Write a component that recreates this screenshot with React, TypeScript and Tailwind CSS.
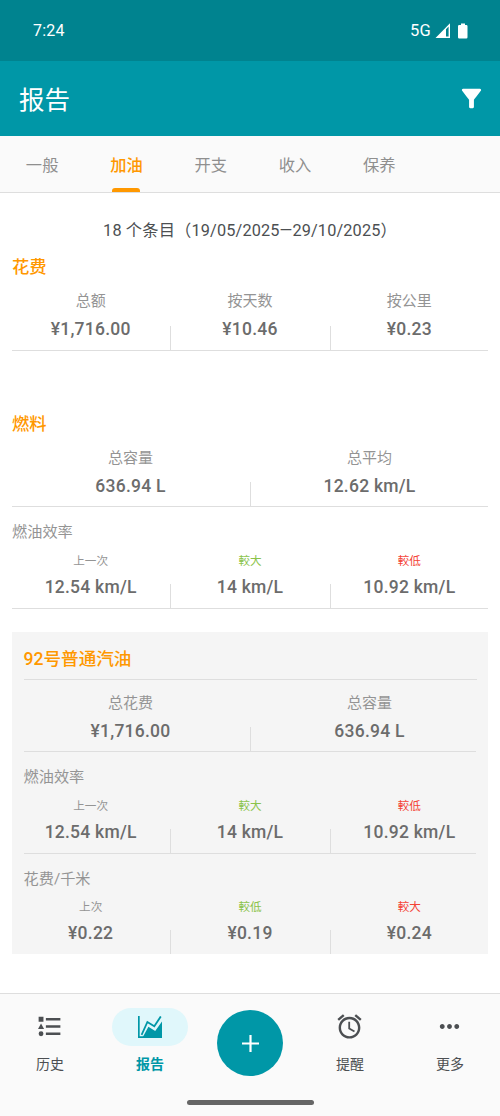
import React from "react";

const listIcon =
  "M5,9.5L7.5,14H2.5L5,9.5M3,4H7V8H3V4M5,20A2,2 0 0,0 7,18A2,2 0 0,0 5,16A2,2 0 0,0 3,18A2,2 0 0,0 5,20M9,5V7H21V5H9M9,19H21V17H9V19M9,13H21V11H9V13Z";
const alarmIcon =
  "M22 5.72l-4.6-3.86-1.29 1.53 4.6 3.86L22 5.72zM7.88 3.39L6.6 1.86 2 5.71l1.29 1.53 4.59-3.85zM12.5 8H11v6l4.75 2.85.75-1.23-4-2.37V8zM12 4c-4.97 0-9 4.03-9 9s4.02 9 9 9c4.97 0 9-4.03 9-9s-4.03-9-9-9zm0 16c-3.87 0-7-3.13-7-7s3.13-7 7-7 7 3.13 7 7-3.13 7-7 7z";
const moreIcon =
  "M6 10c-1.1 0-2 .9-2 2s.9 2 2 2 2-.9 2-2-.9-2-2-2zm12 0c-1.1 0-2 .9-2 2s.9 2 2 2 2-.9 2-2-.9-2-2-2zm-6 0c-1.1 0-2 .9-2 2s.9 2 2 2 2-.9 2-2-.9-2-2-2z";
const filterIcon =
  "M4.25 5.61C6.27 8.2 10 13 10 13v6c0 .55.45 1 1 1h2c.55 0 1-.45 1-1v-6s3.72-4.8 5.74-7.39A.998.998 0 0 0 18.95 4H5.04c-.83 0-1.3.95-.79 1.61z";

function Icon({ d }: { d: string }) {
  return (
    <svg className="size-[29px]" viewBox="0 0 24 24" fill="currentColor">
      <path d={d} />
    </svg>
  );
}

type Tone = "muted" | "good" | "bad";
type Item = { label: string; value: string; tone?: Tone };

const toneClass: Record<Tone, string> = {
  muted: "text-[#949494]",
  good: "text-[#8bc34a]",
  bad: "text-[#f44336]",
};

function Stats({ items, small }: { items: Item[]; small?: boolean }) {
  const height = small ? "h-[57px]" : items.length === 2 ? "h-[61px]" : "h-[62px]";
  return (
    <div className={`-mx-px flex ${height}`}>
      {items.map((item, i) => (
        <div key={i} className="relative flex flex-1 flex-col items-center">
          <div
            className={`${small ? "h-5 text-[11.6px] leading-5" : "mt-px h-6 text-[15px] leading-6"} ${toneClass[item.tone ?? "muted"]}`}
          >
            {item.label}
          </div>
          <div
            className="mt-[4px] text-[17.5px] leading-6 font-medium tracking-[0.24px] whitespace-nowrap text-[#6c6c6c]"
          >
            {item.value}
          </div>
          {i > 0 && <div className="absolute bottom-0 left-0 h-6 w-px bg-[#dedede]" />}
        </div>
      ))}
    </div>
  );
}

const tabs = ["一般", "加油", "开支", "收入", "保养"];

const efficiency: Item[] = [
  { label: "上一次", value: "12.54 km/L" },
  { label: "較大", value: "14 km/L", tone: "good" },
  { label: "較低", value: "10.92 km/L", tone: "bad" },
];

function NavItem({ label, active, children }: { label: string; active?: boolean; children: React.ReactNode }) {
  return (
    <div className={`flex w-[100px] flex-col items-center pt-[14px] ${active ? "text-[#0097a7]" : "text-[#4c4f52]"}`}>
      <div className={`flex h-[38px] w-[76px] items-center justify-center rounded-full ${active ? "bg-[#e0f7fb]" : "pr-px pb-px"}`}>
        {children}
      </div>
      <div className={`mt-[6px] text-[14px] leading-6 ${active ? "font-bold" : ""}`}>{label}</div>
    </div>
  );
}

export default function App() {
  return (
    <div
      lang="zh-CN"
      className="flex h-[1116px] w-[500px] flex-col overflow-hidden bg-white font-['Roboto','Noto_Sans_CJK_SC',sans-serif]"
    >
      <div className="flex h-[61px] shrink-0 items-center justify-between bg-[#00838f] pr-[32px] pl-[33px] text-white">
        <span className="text-[16px] tracking-[0.2px]">7:24</span>
        <div className="flex items-center">
          <span className="pt-px text-[16.5px] tracking-[0.3px]">5G</span>
          <svg className="ml-[4px] h-[15px] w-[16px]" viewBox="0 0 16 15" fill="currentColor">
            <path fillRule="evenodd" d="M0.5 15L15 0.3V15ZM11 6.2V13.5H13.6V3.6Z" />
          </svg>
          <svg className="ml-[7px] h-[16px] w-[10px]" viewBox="0 0 10 16" fill="currentColor">
            <path d="M3 0.5H7V2H8.3Q9.5 2 9.5 3.2V14.2Q9.5 15.4 8.3 15.4H1.2Q0 15.4 0 14.2V3.2Q0 2 1.2 2H3Z" />
          </svg>
        </div>
      </div>

      <header className="flex h-[75px] shrink-0 items-center justify-between bg-[#0097a7] pr-[14px] pl-[19px] text-white">
        <h1 className="pt-[2px] text-[25.5px] leading-8">报告</h1>
        <Icon d={filterIcon} />
      </header>

      <nav className="flex h-[57px] shrink-0 border-b border-[#dedede] bg-[#fafafa]">
        {tabs.map((t, i) => (
          <div
            key={t}
            className={`flex w-[84.3px] flex-col items-center pt-[18px] text-[16.3px] leading-6 ${i === 1 ? "font-medium text-[#ff9800]" : "text-[#8f8f8f]"}`}
          >
            {t}
            {i === 1 && <div className="mt-auto h-1 w-7 rounded-t-[3px] bg-[#ff9800]" />}
          </div>
        ))}
      </nav>

      <main className="flex h-[800px] shrink-0 flex-col px-3">
        <p className="mt-[26px] h-6 text-center text-[16.3px] leading-6 tracking-[0.14px] text-[#4c4f52]">
          18 个条目（19/05/2025—29/10/2025）
        </p>
        <h2 className="mt-[12px] h-6 text-[17.3px] leading-6 font-medium text-[#ff9800]">花费</h2>
        <div className="mt-[9px] border-b border-[#dedede]">
          <Stats
            items={[
              { label: "总额", value: "¥1,716.00" },
              { label: "按天数", value: "¥10.46" },
              { label: "按公里", value: "¥0.23" },
            ]}
          />
        </div>

        <h2 className="mt-[61px] h-6 text-[17.3px] leading-6 font-medium text-[#ff9800]">燃料</h2>
        <div className="mt-[9px] border-b border-[#dedede]">
          <Stats
            items={[
              { label: "总容量", value: "636.94 L" },
              { label: "总平均", value: "12.62 km/L" },
            ]}
          />
        </div>
        <h3 className="mt-[13px] h-6 text-[15.2px] leading-6 text-[#949494]">燃油效率</h3>
        <div className="mt-[7px] border-b border-[#dedede]">
          <Stats small items={efficiency} />
        </div>

        <section className="mt-[23px] h-[322px] bg-[#f5f5f5]">
          <h2 className="mx-[11.5px] h-12 border-b border-[#dedede] pt-[15px] text-[17.6px] leading-6 font-medium text-[#ff9800]">
            92号普通汽油
          </h2>
          <div className="mt-[10px]">
            <Stats
              items={[
                { label: "总花费", value: "¥1,716.00" },
                { label: "总容量", value: "636.94 L" },
              ]}
            />
          </div>
          <div className="mx-3 border-t border-[#dedede]" />
          <h3 className="mx-[11.5px] mt-[13px] h-6 text-[15.2px] leading-6 text-[#949494]">燃油效率</h3>
          <div className="mt-[7px]">
            <Stats small items={efficiency} />
          </div>
          <div className="mx-3 border-t border-[#dedede]" />
          <h3 className="mx-[11.5px] mt-[13px] h-6 text-[15.2px] leading-6 text-[#949494]">花费/千米</h3>
          <div className="mt-[6px]">
            <Stats
              small
              items={[
                { label: "上次", value: "¥0.22" },
                { label: "較低", value: "¥0.19", tone: "good" },
                { label: "較大", value: "¥0.24", tone: "bad" },
              ]}
            />
          </div>
        </section>
      </main>

      <footer className="flex h-[123px] shrink-0 flex-col border-t border-[#dedede] bg-[#fafafa]">
        <div className="flex h-[106px]">
          <NavItem label="历史">
            <Icon d={listIcon} />
          </NavItem>
          <NavItem label="报告" active>
            <svg className="h-[22px] w-[24px]" viewBox="0 0 24 22">
              <path
                d="M0.8 0V21.2H24M3.6 18.8L9.4 6L16.3 10.2L22.8 0.4"
                fill="none"
                stroke="currentColor"
                strokeWidth="1.8"
              />
              <path d="M4.6 21.5L10.4 10.8L17.2 15L24 5.5V22H4Z" fill="currentColor" />
            </svg>
          </NavItem>
          <div className="flex w-[100px] justify-center pt-4">
            <div className="flex size-[66px] items-center justify-center rounded-full bg-[#0097a7] text-white">
              <svg className="size-[17px]" viewBox="0 0 17 17" stroke="currentColor" strokeWidth="2.2">
                <path d="M8.5 0V17M0 8.5H17" />
              </svg>
            </div>
          </div>
          <NavItem label="提醒">
            <Icon d={alarmIcon} />
          </NavItem>
          <NavItem label="更多">
            <Icon d={moreIcon} />
          </NavItem>
        </div>
        <div className="mx-auto h-[5px] w-[127px] rounded-full bg-[#666]" />
      </footer>
    </div>
  );
}
